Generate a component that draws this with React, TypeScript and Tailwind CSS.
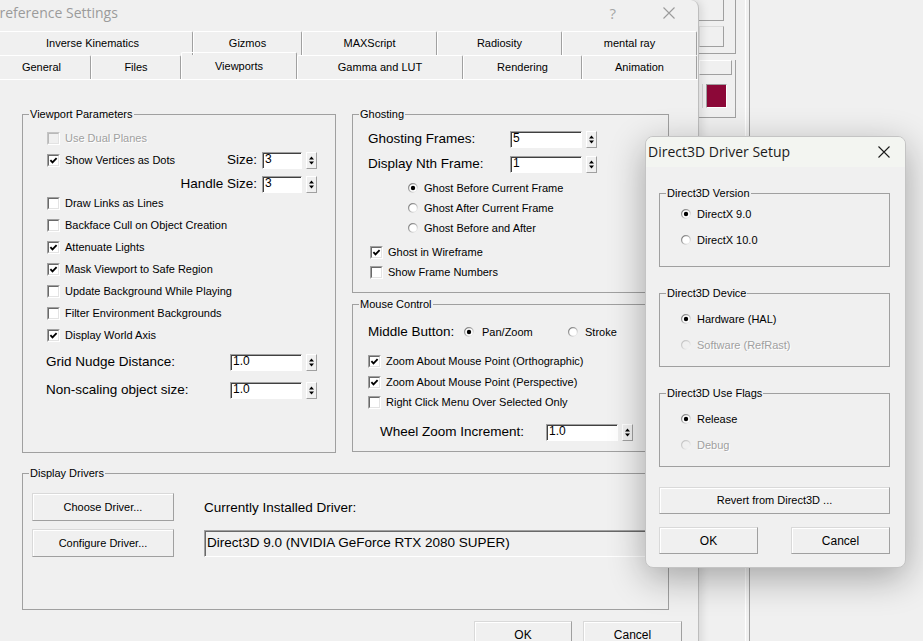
import { useId, type ReactNode } from 'react';

const row1 = [
  ['Inverse Kinematics', 'w-[201px]'],
  ['Gizmos', 'w-[109px]'],
  ['MAXScript', 'w-[135px]'],
  ['Radiosity', 'w-[125px]'],
  ['mental ray', 'w-[135px]'],
];

const row2 = [
  ['General', 'w-[99px]'],
  ['Files', 'w-[90px]'],
  ['Viewports', 'w-[116px]'],
  ['Gamma and LUT', 'w-[166px]'],
  ['Rendering', 'w-[119px]'],
  ['Animation', 'w-[115px]'],
];

function CheckBox({ checked = false, disabled = false }: { checked?: boolean; disabled?: boolean }) {
  return (
    <span
      className={`flex h-[13px] w-[13px] shrink-0 border border-b-white border-r-white ${
        disabled ? 'border-t-[#c4c4c4] border-l-[#c4c4c4]' : 'border-t-[#a0a0a0] border-l-[#a0a0a0]'
      }`}
    >
      <span
        className={`flex h-full w-full items-center justify-center border border-b-[#e3e3e3] border-r-[#e3e3e3] ${
          disabled ? 'border-t-[#b8b8b8] border-l-[#b8b8b8] bg-[#f0f0f0]' : 'border-t-[#696969] border-l-[#696969] bg-white'
        }`}
      >
        {checked && (
          <svg width="9" height="9" viewBox="0 0 9 9">
            <path d="M1.4 4.1 L3.5 6.4 L7.6 2.1" fill="none" stroke="#000" strokeWidth="1.8" />
          </svg>
        )}
      </span>
    </span>
  );
}

function RadioDot({ checked = false, disabled = false }: { checked?: boolean; disabled?: boolean }) {
  const id = 'rg' + useId().replace(/[^a-zA-Z0-9]/g, '');
  return (
    <svg width="10" height="10" viewBox="0 0 10 10" className="shrink-0">
      <defs>
        <linearGradient id={id} x1="0" y1="0" x2="1" y2="1">
          <stop offset="0" stopColor={disabled ? '#bdbdbd' : '#6e6e6e'} />
          <stop offset="0.5" stopColor={disabled ? '#d6d6d6' : '#b4b4b4'} />
          <stop offset="1" stopColor="#ffffff" />
        </linearGradient>
      </defs>
      <circle cx="5" cy="5" r="4.4" fill={disabled ? '#f0f0f0' : '#ffffff'} stroke={`url(#${id})`} strokeWidth="1.2" />
      {checked && <circle cx="5" cy="5" r="2.2" fill="#000" />}
    </svg>
  );
}

function Spin() {
  return (
    <span className="flex h-[17px] w-[11px] shrink-0 border border-t-white border-l-white border-b-[#a0a0a0] border-r-[#a0a0a0] bg-[#f0f0f0]">
      <svg width="9" height="15" viewBox="0 0 9 15">
        <path d="M2 6.5 L4.5 3.5 L7 6.5Z M2 8.5 L4.5 11.5 L7 8.5Z" fill="#000" />
      </svg>
    </span>
  );
}

function Field({ value, className }: { value: string; className: string }) {
  return (
    <span
      className={`block h-[17px] shrink-0 border border-t-[#a0a0a0] border-l-[#a0a0a0] border-b-white border-r-white bg-white pl-[2px] text-[12px] leading-[13px] shadow-[inset_1px_1px_0_#404040] ${className}`}
    >
      {value}
    </span>
  );
}

function Btn({ children, className }: { children: ReactNode; className: string }) {
  return (
    <button
      type="button"
      className={`flex items-center justify-center border border-t-[#d9d9d9] border-l-[#d9d9d9] border-b-[#a0a0a0] border-r-[#a0a0a0] bg-[#f0f0f0] text-[11px] shadow-[inset_1px_1px_0_#fff] ${className}`}
    >
      {children}
    </button>
  );
}

function Group({ title, className, children }: { title: string; className: string; children: ReactNode }) {
  return (
    <fieldset className={`border border-[#a0a0a0] px-[6px] ${className}`}>
      <legend className="px-[1px] text-[11px] leading-[13px]">{title}</legend>
      {children}
    </fieldset>
  );
}

function Check({ label, checked, disabled, className = 'h-[22px]' }: { label: string; checked?: boolean; disabled?: boolean; className?: string }) {
  return (
    <div className={`flex items-center gap-[5px] ${className}`}>
      <CheckBox checked={checked} disabled={disabled} />
      <span className={`text-[11px] ${disabled ? 'text-[#a0a0a0] [text-shadow:1px_1px_0_#fff]' : ''}`}>{label}</span>
    </div>
  );
}

function Radio({ label, checked, disabled, className = 'h-[20px]' }: { label: string; checked?: boolean; disabled?: boolean; className?: string }) {
  return (
    <div className={`flex items-center gap-[6px] ${className}`}>
      <RadioDot checked={checked} disabled={disabled} />
      <span className={`text-[11px] ${disabled ? 'text-[#a0a0a0] [text-shadow:1px_1px_0_#fff]' : ''}`}>{label}</span>
    </div>
  );
}

function CloseGlyph({ color }: { color: string }) {
  return (
    <svg width="12" height="12" viewBox="0 0 12 12">
      <path d="M0.5 0.5 L11.5 11.5 M11.5 0.5 L0.5 11.5" stroke={color} strokeWidth="1.1" />
    </svg>
  );
}

function BackWindow() {
  return (
    <div className="absolute left-[690px] top-0 h-[641px] w-[60px] border-r border-[#a0a0a0] shadow-[inset_-3px_0_0_#f0f0f0,inset_-4px_0_0_#fff]">
      <div className="h-[54px] w-[46px] border-r border-b border-[#a0a0a0] pl-[9px]">
        <div className="h-[21px] w-[25px] border-r border-b border-[#a0a0a0]" />
        <div className="mt-[5px] h-[21px] w-[25px] border border-t-[#dcdcdc] border-l-[#dcdcdc] border-b-[#a0a0a0] border-r-[#a0a0a0]" />
      </div>
      <div className="mt-[6px] h-[58px] w-[46px] border-r border-b border-[#a0a0a0]">
        <div className="ml-[9px] h-[15px] w-[33px] border border-t-white border-l-white border-b-[#a0a0a0] border-r-[#a0a0a0]" />
        <div className="ml-[9px] mt-[9px] flex h-[24px] gap-[3px]">
          <div className="w-[4px] border-r border-[#d0d0d0]" />
          <div className="h-[24px] w-[21px] border border-t-[#a0a0a0] border-l-[#a0a0a0] border-b-white border-r-white bg-[#8c0838]" />
        </div>
      </div>
    </div>
  );
}

function MainWindow() {
  return (
    <div className="absolute left-[-10px] top-0 z-10 h-[680px] w-[709px] rounded-tr-[8px] border-r border-[#bdbdbd] bg-[#f0f0f0] shadow-[2px_0_10px_rgba(0,0,0,0.12)]">
      {/* title bar */}
      <div className="flex h-[31px] items-start pt-[2px]">
        <span className="pl-[1px] font-['Open_Sans',sans-serif] text-[14px] leading-[22px] text-[#9b9b9b]">Preference Settings</span>
        <span className="ml-auto mr-[47px] font-['Open_Sans',sans-serif] text-[15px] leading-[22px] text-[#a6a6a6]">?</span>
        <span className="mr-[23px] mt-[5px]">
          <CloseGlyph color="#9b9b9b" />
        </span>
      </div>

      {/* tabs */}
      <div className="flex h-[24px] pl-[2px]">
        {row1.map(([t, w]) => (
          <div key={t} className={`${w} flex items-center justify-center rounded-t-[2px] border-t border-l border-r border-t-white border-l-white border-r-[#a0a0a0] text-[11px]`}>
            {t}
          </div>
        ))}
      </div>
      <div className="flex h-[25px] items-end border-b border-white pl-[2px]">
        {row2.map(([t, w]) => (
          <div
            key={t}
            className={`${w} ${t === 'Viewports' ? 'h-[27px]' : 'h-[24px]'} flex items-center justify-center rounded-t-[2px] border-t border-l border-r border-t-white border-l-white border-r-[#a0a0a0] text-[11px]`}
          >
            {t}
          </div>
        ))}
      </div>

      {/* panel */}
      <div className="flex gap-[16px] pl-[32px] pt-[28px]">
        <Group title="Viewport Parameters" className="h-[345px] w-[314px]">
          <div className="pl-[18px] pr-[12px] pt-[6px]">
            <Check label="Use Dual Planes" disabled />
            <div className="flex h-[22px] items-center">
              <Check label="Show Vertices as Dots" checked />
              <span className="ml-auto text-[13.5px]">Size:</span>
              <Field value="3" className="ml-[5px] w-[40px]" />
              <span className="ml-[4px]">
                <Spin />
              </span>
            </div>
            <div className="mt-[5px] flex h-[17px] items-center justify-end">
              <span className="text-[13.5px]">Handle Size:</span>
              <Field value="3" className="ml-[5px] w-[40px]" />
              <span className="ml-[4px]">
                <Spin />
              </span>
            </div>
            <Check label="Draw Links as Lines" className="-mt-[1px] h-[22px]" />
            <Check label="Backface Cull on Object Creation" />
            <Check label="Attenuate Lights" checked />
            <Check label="Mask Viewport to Safe Region" checked />
            <Check label="Update Background While Playing" />
            <Check label="Filter Environment Backgrounds" />
            <Check label="Display World Axis" checked />
            <div className="mt-[2px] flex h-[28px] items-center">
              <span className="-ml-[1px] text-[13.5px]">Grid Nudge Distance:</span>
              <Field value="1.0" className="ml-auto w-[72px]" />
              <span className="ml-[4px]">
                <Spin />
              </span>
            </div>
            <div className="flex h-[28px] items-center">
              <span className="-ml-[1px] text-[13.5px]">Non-scaling object size:</span>
              <Field value="1.0" className="ml-auto w-[72px]" />
              <span className="ml-[4px]">
                <Spin />
              </span>
            </div>
          </div>
        </Group>

        <div className="flex w-[317px] flex-col">
          <Group title="Ghosting" className="h-[185px]">
            <div className="pl-[9px] pt-[10px]">
              <div className="flex h-[17px] items-center">
                <span className="w-[142px] text-[13.5px]">Ghosting Frames:</span>
                <Field value="5" className="w-[72px]" />
                <span className="ml-[4px]">
                  <Spin />
                </span>
              </div>
              <div className="mt-[8px] flex h-[17px] items-center">
                <span className="w-[142px] text-[13.5px]">Display Nth Frame:</span>
                <Field value="1" className="w-[72px]" />
                <span className="ml-[4px]">
                  <Spin />
                </span>
              </div>
              <div className="mt-[5px] pl-[40px]">
                <Radio label="Ghost Before Current Frame" checked />
                <Radio label="Ghost After Current Frame" />
                <Radio label="Ghost Before and After" />
              </div>
              <div className="mt-[4px] pl-[2px]">
                <Check label="Ghost in Wireframe" checked className="h-[20px]" />
                <Check label="Show Frame Numbers" className="h-[20px]" />
              </div>
            </div>
          </Group>

          <Group title="Mouse Control" className="mt-[5px] h-[154px]">
            <div className="pl-[9px] pt-[11px]">
              <div className="flex h-[20px] items-center">
                <span className="w-[96px] text-[13.5px]">Middle Button:</span>
                <Radio label="Pan/Zoom" checked className="h-[20px] w-[104px] gap-[8px]" />
                <Radio label="Stroke" className="h-[20px] gap-[7px]" />
              </div>
              <div className="mt-[8px]">
                <Check label="Zoom About Mouse Point (Orthographic)" checked />
                <Check label="Zoom About Mouse Point (Perspective)" checked className="h-[21px]" />
                <Check label="Right Click Menu Over Selected Only" className="h-[18px]" />
              </div>
              <div className="mt-[13px] flex h-[17px] items-center pl-[12px]">
                <span className="w-[166px] text-[13.5px]">Wheel Zoom Increment:</span>
                <Field value="1.0" className="w-[72px]" />
                <span className="ml-[4px]">
                  <Spin />
                </span>
              </div>
            </div>
          </Group>
        </div>
      </div>

      <div className="ml-[32px] mt-[14px] w-[647px]">
        <Group title="Display Drivers" className="h-[143px]">
          <div className="grid grid-cols-[142px_1fr] gap-x-[30px] gap-y-[8px] pl-[3px] pt-[13px]">
            <Btn className="h-[28px] w-[142px]">Choose Driver...</Btn>
            <div className="flex items-center pt-[2px] text-[13.5px]">Currently Installed Driver:</div>
            <Btn className="h-[28px] w-[142px]">Configure Driver...</Btn>
            <div className="flex items-center">
              <span className="flex h-[27px] w-[456px] items-center border border-t-[#a0a0a0] border-l-[#a0a0a0] border-b-white border-r-white pl-[2px] text-[13.5px] shadow-[inset_1px_1px_0_#696969]">
                Direct3D 9.0 (NVIDIA GeForce RTX 2080 SUPER)
              </span>
            </div>
          </div>
        </Group>
      </div>

      <div className="mt-[11px] flex justify-end gap-[11px] pr-[16px]">
        <Btn className="h-[28px] w-[98px] text-[12px]">OK</Btn>
        <Btn className="h-[28px] w-[99px] text-[12px]">Cancel</Btn>
      </div>
    </div>
  );
}

function DriverDialog() {
  return (
    <div className="absolute left-[645px] top-[136px] z-20 h-[432px] w-[261px] overflow-hidden rounded-[8px] border border-[#c4c4c4] bg-[#f0f0f0] shadow-[0_10px_36px_rgba(0,0,0,0.32)]">
      <div className="flex h-[30px] items-center bg-[#f3f5f1] pb-[2px] pl-[2px] pr-[15px]">
        <span className="font-['Open_Sans',sans-serif] text-[14px] text-[#1b1b1b]">Direct3D Driver Setup</span>
        <span className="ml-auto mt-[2px]">
          <CloseGlyph color="#1b1b1b" />
        </span>
      </div>
      <div className="px-[13px] pt-[20px]">
        <Group title="Direct3D Version" className="h-[80px] w-[231px]">
          <div className="pl-[15px] pt-[4px]">
            <Radio label="DirectX 9.0" checked />
            <Radio label="DirectX 10.0" className="mt-[6px] h-[20px]" />
          </div>
        </Group>
        <Group title="Direct3D Device" className="mt-[20px] h-[80px] w-[231px]">
          <div className="pl-[15px] pt-[9px]">
            <Radio label="Hardware (HAL)" checked />
            <Radio label="Software (RefRast)" disabled className="mt-[6px] h-[20px]" />
          </div>
        </Group>
        <Group title="Direct3D Use Flags" className="mt-[20px] h-[80px] w-[231px]">
          <div className="pl-[15px] pt-[9px]">
            <Radio label="Release" checked />
            <Radio label="Debug" disabled className="mt-[6px] h-[20px]" />
          </div>
        </Group>
        <Btn className="mt-[20px] h-[27px] w-[231px]">Revert from Direct3D ...</Btn>
        <div className="mt-[13px] flex w-[231px] justify-between">
          <Btn className="h-[27px] w-[99px] text-[12px]">OK</Btn>
          <Btn className="h-[27px] w-[99px] text-[12px]">Cancel</Btn>
        </div>
      </div>
    </div>
  );
}

export default function App() {
  return (
    <div className="relative h-[641px] w-[923px] overflow-hidden bg-[#f0f0f0] font-['Liberation_Sans',Arial,sans-serif] text-black">
      <BackWindow />
      <MainWindow />
      <DriverDialog />
    </div>
  );
}
